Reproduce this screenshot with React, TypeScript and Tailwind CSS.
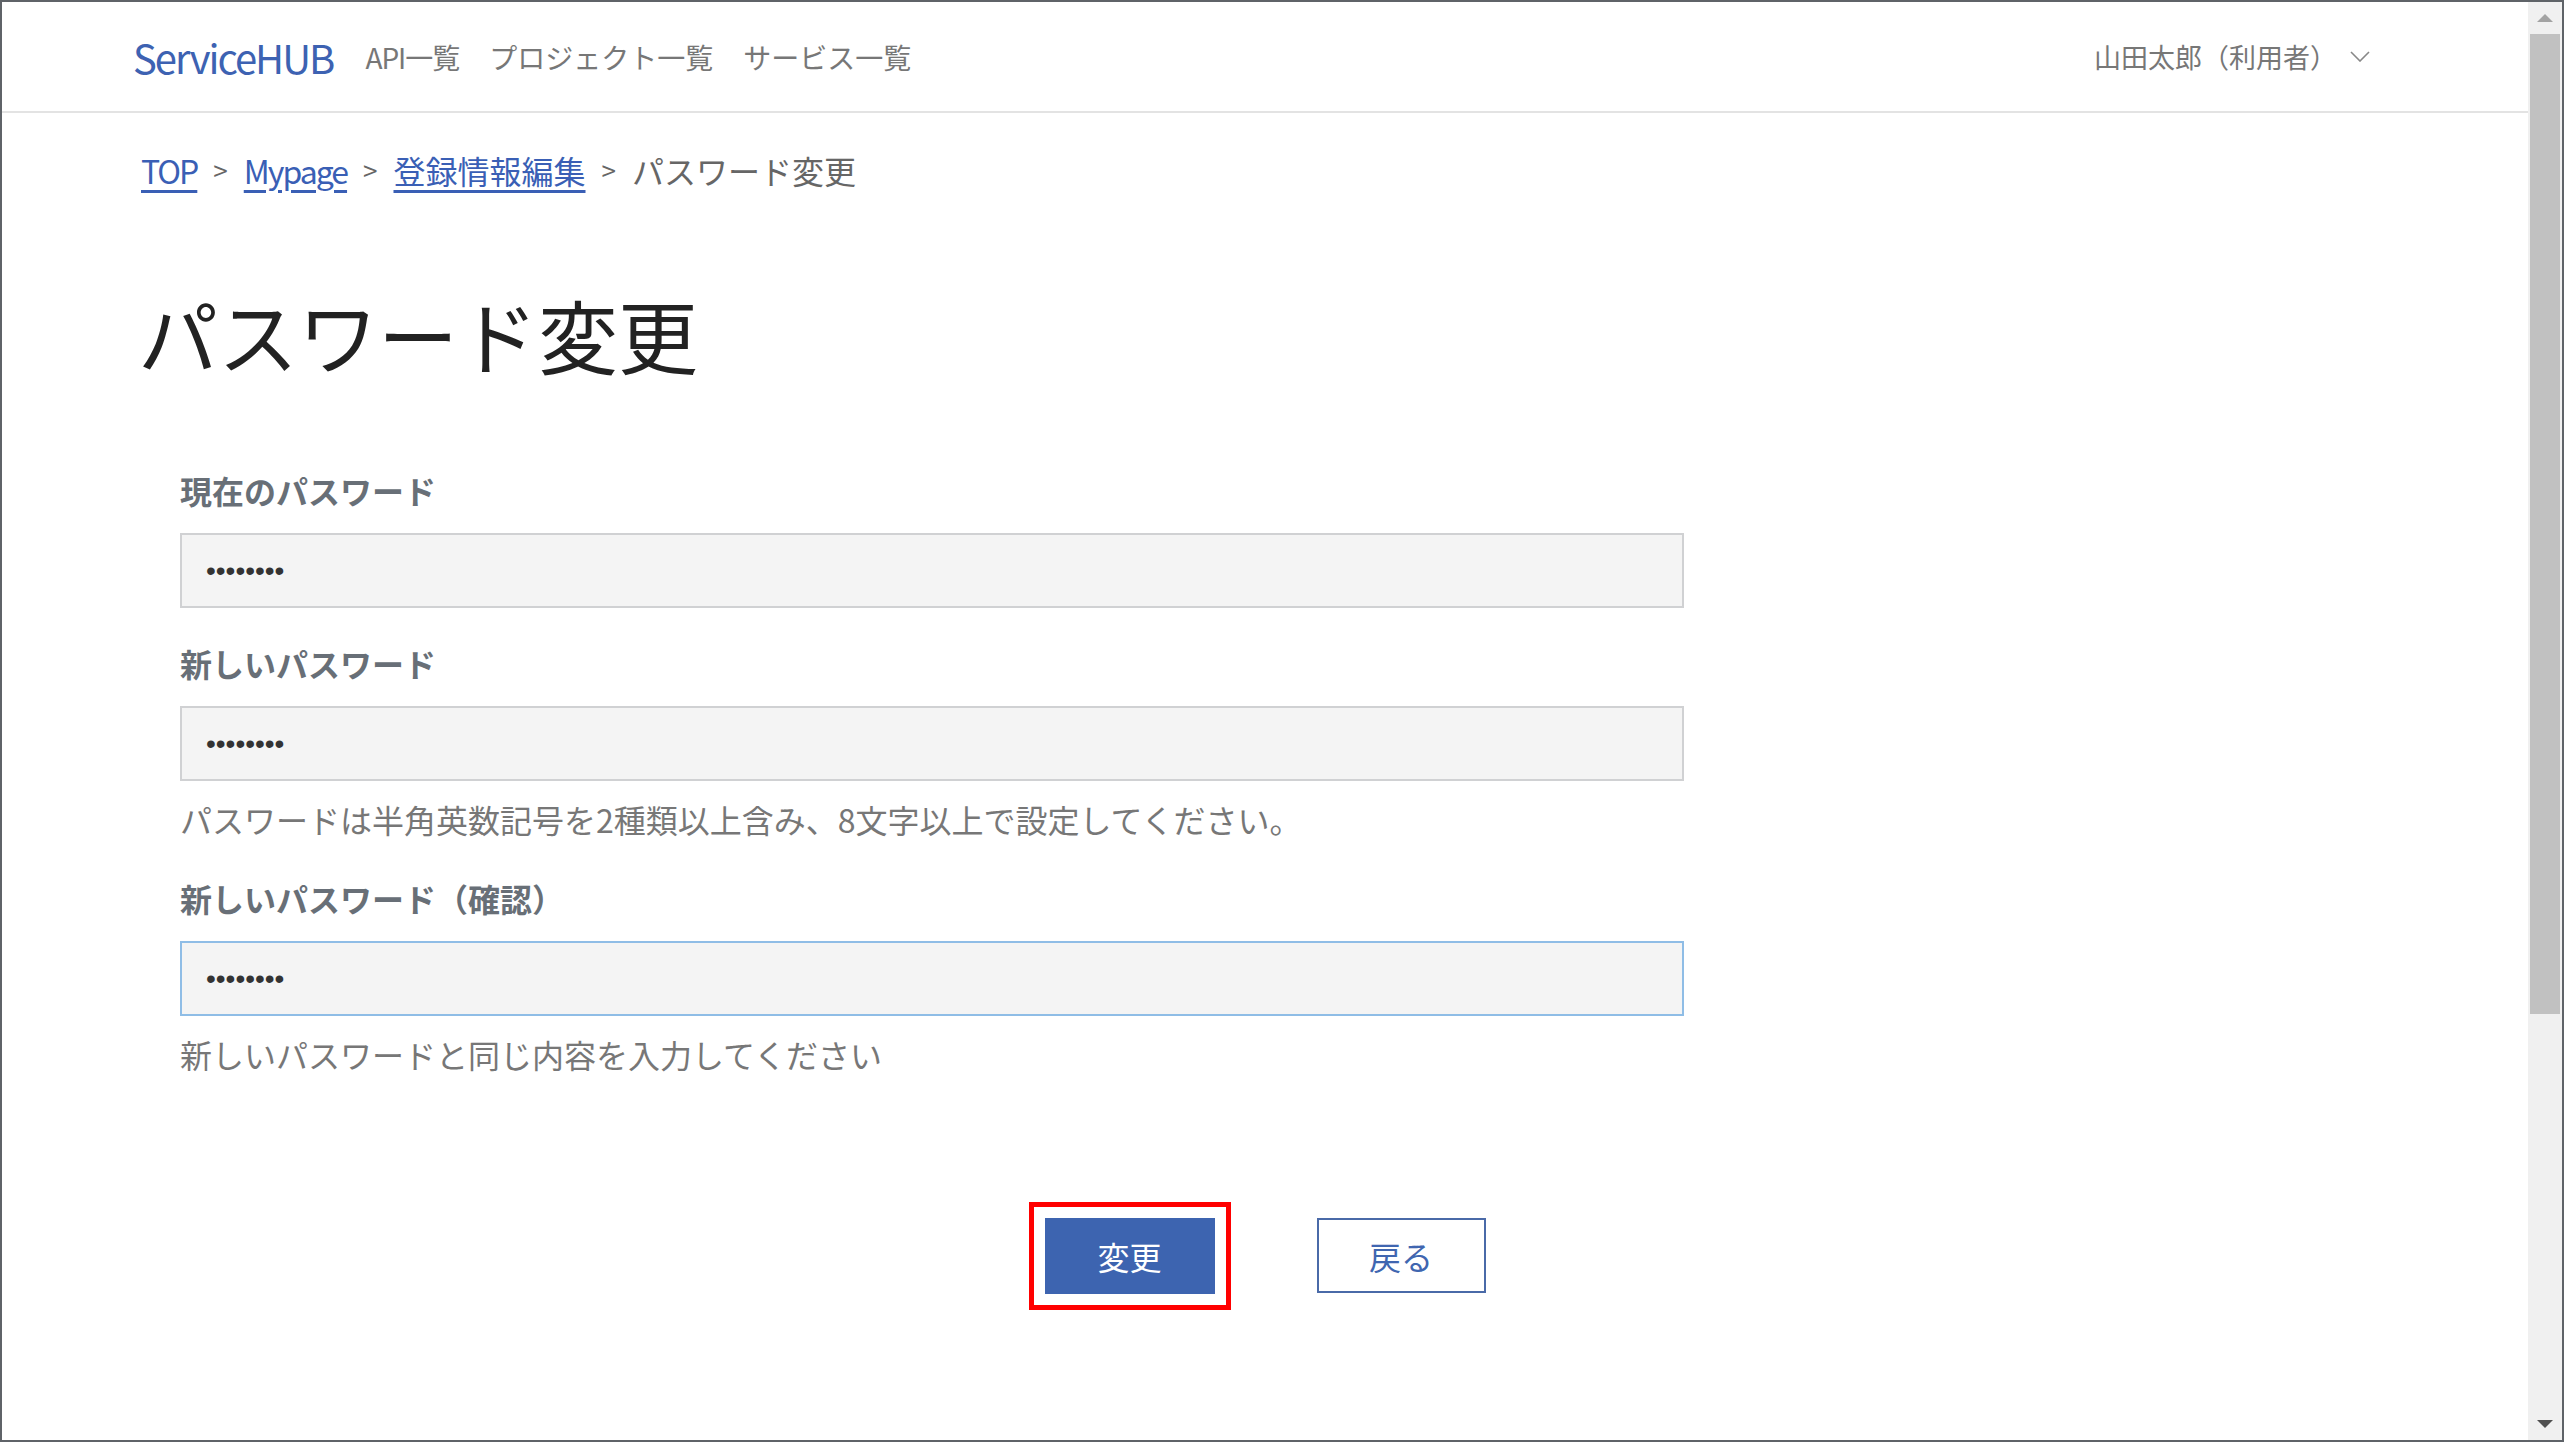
import React from "react";

const fields = [
  { label: "現在のパスワード", hint: "", focused: false },
  {
    label: "新しいパスワード",
    hint: "パスワードは半角英数記号を2種類以上含み、8文字以上で設定してください。",
    focused: false,
  },
  {
    label: "新しいパスワード（確認）",
    hint: "新しいパスワードと同じ内容を入力してください",
    focused: true,
  },
];

const Scrollbar: React.FC = () => (
  <div className="flex w-[34px] flex-col items-center bg-[#f0f0f0]">
    <div className="flex h-[32px] items-center justify-center">
      <svg width="16" height="8" viewBox="0 0 16 8">
        <polygon points="0,8 8,0 16,8" fill="#a3a3a3" />
      </svg>
    </div>
    <div className="h-[980px] w-[30px] bg-[#c1c1c1]" />
    <div className="flex-1" />
    <div className="flex h-[32px] items-center justify-center">
      <svg width="16" height="8" viewBox="0 0 16 8">
        <polygon points="0,0 16,0 8,8" fill="#505050" />
      </svg>
    </div>
  </div>
);

const App: React.FC = () => {
  return (
    <div className="flex h-[1442px] w-[2564px] overflow-hidden border-2 border-[#5f6368] bg-white font-['Noto_Sans_CJK_JP',sans-serif]">
      <div className="flex flex-1 flex-col">
        <header className="flex h-[111px] shrink-0 items-center justify-between border-b-2 border-[#e3e3e3] pl-[131px] pr-[158px]">
          <div className="flex items-center">
            <span className="mr-[32px] text-[40px] leading-none tracking-[-2px] text-[#3d62b2]">
              ServiceHUB
            </span>
            <nav className="flex gap-[30px] text-[28px] leading-none text-[#777]">
              <span className="tracking-[-1px]">API一覧</span>
              <span>プロジェクト一覧</span>
              <span>サービス一覧</span>
            </nav>
          </div>
          <button className="flex items-center gap-[13px] text-[27px] leading-none text-[#777]">
            <span>山田太郎（利用者）</span>
            <svg width="20" height="11" viewBox="0 0 20 11" fill="none">
              <path d="M1 1l9 9 9-9" stroke="#888" strokeWidth="1.6" />
            </svg>
          </button>
        </header>

        <main className="flex flex-col">
          <div className="px-[136px]">
            <div className="ml-[3px] mt-[33px] flex h-[48px] items-center gap-[16px] text-[32px] leading-[48px]">
              <a href="#" className="tracking-[-2px] text-[#3a5fb5] underline underline-offset-[6px]">
                TOP
              </a>
              <span className="text-[26px] text-[#666]">&gt;</span>
              <a href="#" className="tracking-[-2px] text-[#3a5fb5] underline underline-offset-[6px]">
                Mypage
              </a>
              <span className="text-[26px] text-[#666]">&gt;</span>
              <a href="#" className="text-[#3a5fb5] underline underline-offset-[6px]">
                登録情報編集
              </a>
              <span className="text-[26px] text-[#666]">&gt;</span>
              <span className="text-[#666]">パスワード変更</span>
            </div>

            <h1 className="mt-[91px] text-[80px] font-normal leading-[96px] text-[#222]">
              パスワード変更
            </h1>

            <form className="mt-[85px] w-[1546px] pl-[42px]">
              {fields.map((f, i) => (
                <div key={f.label} className={i === 0 ? "" : "mt-[31px]"}>
                  <label className="block text-[32px] font-bold leading-[48px] text-[#686f77]">
                    {f.label}
                  </label>
                  <input
                    type="password"
                    readOnly
                    defaultValue="password"
                    className={
                      f.focused
                        ? "mt-[19px] block h-[75px] w-[1504px] border-2 border-[#8fbde6] bg-[#f4f4f4] px-[24px] font-['Liberation_Sans',sans-serif] text-[28px] text-[#333] outline-none"
                        : "mt-[19px] block h-[75px] w-[1504px] border-2 border-[#d0d1d3] bg-[#f4f4f4] px-[24px] font-['Liberation_Sans',sans-serif] text-[28px] text-[#333] outline-none"
                    }
                  />
                  {f.hint && (
                    <p className="mt-[14px] text-[32px] leading-[48px] text-[#777]">
                      {f.hint}
                    </p>
                  )}
                </div>
              ))}
            </form>
          </div>

          <div className="mt-[140px] flex justify-center gap-[102px]">
            <button className="h-[76px] w-[170px] bg-[#3d64b0] text-[32px] text-white outline-[5px] outline-offset-[11px] outline-[#ff0000] outline-solid">
              変更
            </button>
            <button className="h-[75px] w-[169px] border-2 border-[#4a6aa8] bg-white text-[32px] text-[#4066b0]">
              戻る
            </button>
          </div>
        </main>
      </div>
      <Scrollbar />
    </div>
  );
};

export default App;
